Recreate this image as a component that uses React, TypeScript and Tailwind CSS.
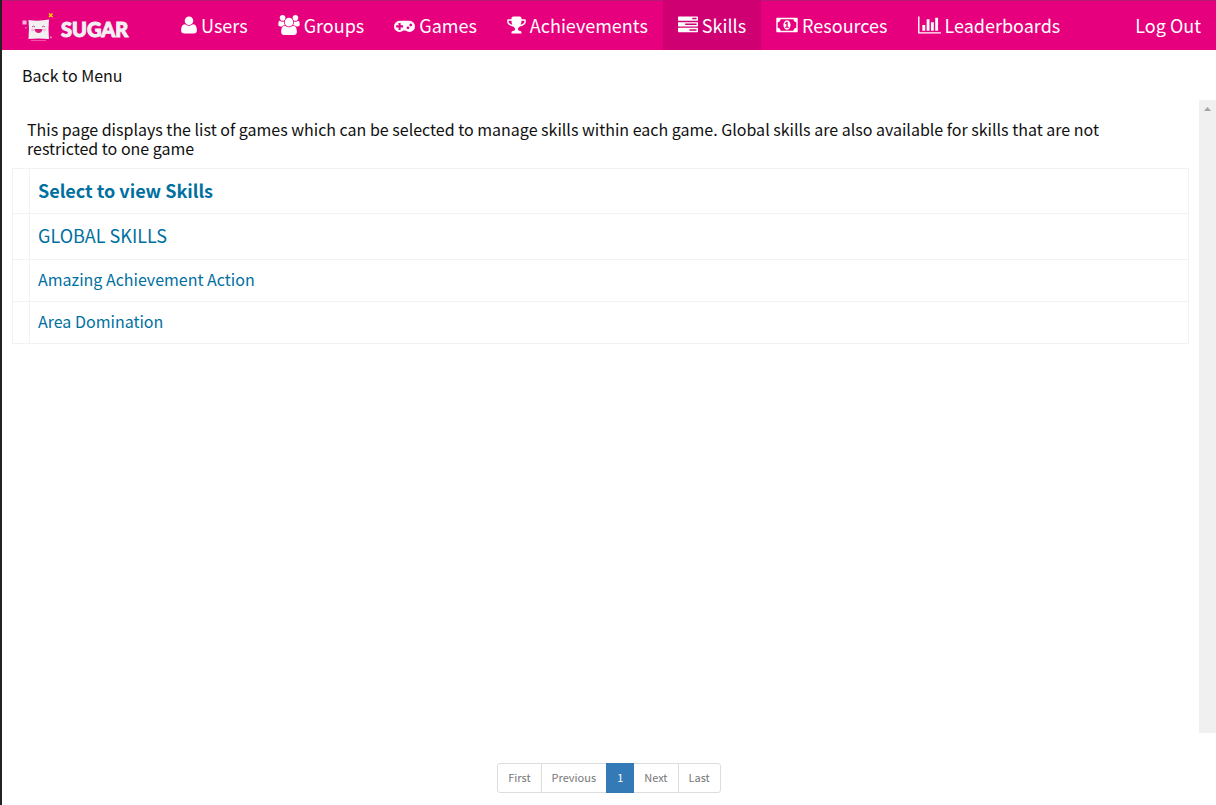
import type { ReactNode } from "react";

type IconShape = { viewBox: string; size: string; path: string };

const icons: Record<string, IconShape> = {
  user: {
    viewBox: "192 0 1408 1792",
    size: "w-4 h-5",
    path: "M1600 1405q0 120-73 189.5t-194 69.5h-874q-121 0-194-69.5t-73-189.5q0-53 3.5-103.5t14-109 26.5-108.5 43-97.5 62-81 85.5-53.5 111.5-20q9 0 42 21.5t74.5 48 108 48 133.5 21.5 133.5-21.5 108-48 74.5-48 42-21.5q61 0 111.5 20t85.5 53.5 62 81 43 97.5 26.5 108.5 14 109 3.5 103.5zm-320-893q0 159-112.5 271.5t-271.5 112.5-271.5-112.5-112.5-271.5 112.5-271.5 271.5-112.5 271.5 112.5 112.5 271.5z",
  },
  users: {
    viewBox: "64 0 1920 1792",
    size: "w-[22px] h-5",
    path: "M657 896q-162 5-265 128h-134q-82 0-138-40.5t-56-118.5q0-353 124-353 6 0 43.5 21t97.5 42.5 119 21.5q67 0 133-23-5 37-5 66 0 159 81 256zm1071 637q0 120-73 189.5t-194 69.5h-874q-121 0-194-69.5t-73-189.5q0-53 3.5-103.5t14-109 26.5-108.5 43-97.5 62-81 85.5-53.5 111.5-20q10 0 43 21.5t73 48 107 48 135 21.5 135-21.5 107-48 73-48 43-21.5q61 0 111.5 20t85.5 53.5 62 81 43 97.5 26.5 108.5 14 109 3.5 103.5zm-1024-1277q0 106-75 181t-181 75-181-75-75-181 75-181 181-75 181 75 75 181zm704 384q0 159-112.5 271.5t-271.5 112.5-271.5-112.5-112.5-271.5 112.5-271.5 271.5-112.5 271.5 112.5 112.5 271.5zm576 225q0 78-56 118.5t-138 40.5h-134q-103-123-265-128 81-97 81-256 0-29-5-66 66 23 133 23 59 0 119-21.5t97.5-42.5 43.5-21q124 0 124 353zm-128-609q0 106-75 181t-181 75-181-75-75-181 75-181 181-75 181 75 75 181z",
  },
  gamepad: {
    viewBox: "0 0 1920 1792",
    size: "w-[21px] h-5",
    path: "M832 1088v-128q0-14-9-23t-23-9h-192v-192q0-14-9-23t-23-9h-128q-14 0-23 9t-9 23v192h-192q-14 0-23 9t-9 23v128q0 14 9 23t23 9h192v192q0 14 9 23t23 9h128q14 0 23-9t9-23v-192h192q14 0 23-9t9-23zm576 64q0-53-37.5-90.5t-90.5-37.5-90.5 37.5-37.5 90.5 37.5 90.5 90.5 37.5 90.5-37.5 37.5-90.5zm256-256q0-53-37.5-90.5t-90.5-37.5-90.5 37.5-37.5 90.5 37.5 90.5 90.5 37.5 90.5-37.5 37.5-90.5zm256 128q0 212-150 362t-362 150q-192 0-338-128h-220q-146 128-338 128-212 0-362-150t-150-362 150-362 362-150h896q212 0 362 150t150 362z",
  },
  trophy: {
    viewBox: "64 0 1664 1792",
    size: "w-[19px] h-5",
    path: "M522 883q-74-162-74-371h-256v96q0 78 94.5 162t235.5 113zm1078-275v-96h-256q0 209-74 371 141-29 235.5-113t94.5-162zm128-128v128q0 71-41.5 143t-112 130-173 97.5-215.5 44.5q-42 54-95 95-38 34-52.5 72.5t-14.5 89.5q0 54 30.5 91t97.5 37q75 0 133.5 45.5t58.5 114.5v64q0 14-9 23t-23 9h-832q-14 0-23-9t-9-23v-64q0-69 58.5-114.5t133.5-45.5q67 0 97.5-37t30.5-91q0-51-14.5-89.5t-52.5-72.5q-53-41-95-95-113-5-215.5-44.5t-173-97.5-112-130-41.5-143v-128q0-40 28-68t68-28h288v-96q0-66 47-113t113-47h576q66 0 113 47t47 113v96h288q40 0 68 28t28 68z",
  },
  tasks: {
    viewBox: "0 0 1792 1792",
    size: "w-5 h-5",
    path: "M1024 1408h640v-128h-640v128zm-384-512h1024v-128h-1024v128zm640-512h384v-128h-384v128zm512 832v256q0 26-19 45t-45 19h-1664q-26 0-45-19t-19-45v-256q0-26 19-45t45-19h1664q26 0 45 19t19 45zm0-512v256q0 26-19 45t-45 19h-1664q-26 0-45-19t-19-45v-256q0-26 19-45t45-19h1664q26 0 45 19t19 45zm0-512v256q0 26-19 45t-45 19h-1664q-26 0-45-19t-19-45v-256q0-26 19-45t45-19h1664q26 0 45 19t19 45z",
  },
  money: {
    viewBox: "0 0 1920 1792",
    size: "w-[22px] h-5",
    path: "M768 1152h384v-96h-128v-448h-114l-148 137 77 80q42-37 55-57h2v288h-128v96zm512-256q0 70-21 142t-59.5 134-101.5 101-138 39-138-39-101.5-101-59.5-134-21-142 21-142 59.5-134 101.5-101 138-39 138 39 101.5 101 59.5 134 21 142zm512 256v-512q-106 0-181-75t-75-181h-1152q0 106-75 181t-181 75v512q106 0 181 75t75 181h1152q0-106 75-181t181-75zm128-832v1152q0 26-19 45t-45 19h-1792q-26 0-45-19t-19-45v-1152q0-26 19-45t45-19h1792q26 0 45 19t19 45z",
  },
  chart: {
    viewBox: "0 0 2048 1792",
    size: "w-[23px] h-5",
    path: "M640 896v512h-256v-512h256zm384-512v1024h-256v-1024h256zm1024 1152v128h-2048v-1536h128v1408h1920zm-640-896v768h-256v-768h256zm384-384v1152h-256v-1152h256z",
  },
};

const navItems = [
  { label: "Users", icon: "user" },
  { label: "Groups", icon: "users" },
  { label: "Games", icon: "gamepad" },
  { label: "Achievements", icon: "trophy" },
  { label: "Skills", icon: "tasks", active: true },
  { label: "Resources", icon: "money" },
  { label: "Leaderboards", icon: "chart" },
];

function NavIcon({ name }: { name: string }) {
  const icon = icons[name];
  return (
    <svg viewBox={icon.viewBox} className={`${icon.size} shrink-0`} fill="currentColor" overflow="visible" aria-hidden="true">
      <path d={icon.path} />
    </svg>
  );
}

function Logo() {
  return (
    <a href="#home" className="flex h-[50px] w-[146px] items-center gap-2 pl-5 text-[#f3f0f2]">
      <svg viewBox="0 0 31 32" className="h-8 w-[31px] shrink-0" aria-hidden="true">
        <path d="M0.5 11.5h4v4h-4z" fill="#f3b9dc" />
        <path d="M3 18h1.5v1.5H3z" fill="#f06ab4" />
        <path d="M6.500 11Q17 12.500 27 10.500q-1 9.500 0 19.500Q16 29 6.500 30Q7.500 20 6.500 11z" fill="#f3f0f2" />
        <path d="M10 18q1.500-1.800 3 0M20 18q1.500-1.800 3 0" fill="none" stroke="#a5407d" strokeWidth="0.9" />
        <circle cx="10.500" cy="21" r="1.500" fill="#f8bcdc" />
        <circle cx="22.500" cy="21" r="1.500" fill="#f8bcdc" />
        <path d="M12.500 20h8q-0.500 4-4 4t-4-4z" fill="#d31c7d" />
        <path d="M28 27.500h1.700v1.700H28z" fill="#f39ccc" />
        <path d="M9 31.500h15" stroke="#f468b2" strokeWidth="0.8" />
        <path d="M27 4.500l3.500 3.500M30.500 4.500L27 8" stroke="#ffd400" strokeWidth="1.500" />
      </svg>
      <span className="pt-[7px] font-['Lato'] text-[20px] leading-6 font-black [-webkit-text-stroke:1px_#f3f0f2] [stroke-linejoin:round]">
        SUGAR
      </span>
    </a>
  );
}

function Row({ children, className }: { children: ReactNode; className: string }) {
  return (
    <tr className={className}>
      <td className="border border-[#f2f2f2]" />
      <td className="border border-[#f2f2f2] px-2 pb-[3px]">
        <a href="#game">{children}</a>
      </td>
    </tr>
  );
}

const pageItem = "flex h-[30px] items-center border-l border-[#dddddd] px-[10px] pb-[2px] first:border-l-0";

export default function App() {
  return (
    <div className="flex min-h-screen flex-col border-l-2 border-[#222222] bg-white font-['Noto_Sans_CJK_SC',sans-serif] text-[16px] text-[#111111]">
      <header className="flex h-[50px] items-stretch bg-[#e6007e] text-[18px] text-white shadow-[inset_0_1px_0_#b01a70]">
        <Logo />
        <nav className="ml-[18px] flex">
          {navItems.map((item) => (
            <a
              key={item.label}
              href={`#${item.label.toLowerCase()}`}
              className={`flex items-center gap-1 px-[15px] ${item.active ? "bg-[#cf0071]" : ""}`}
            >
              <NavIcon name={item.icon} />
              <span className="pb-px leading-6">{item.label}</span>
            </a>
          ))}
        </nav>
        <a href="#logout" className="ml-auto flex items-center px-[15px] pb-px leading-6">
          Log Out
        </a>
      </header>

      <div className="flex h-[50px] items-center px-5 pb-px">
        <a href="#menu" className="leading-5">
          Back to Menu
        </a>
      </div>

      <div className="flex flex-1">
        <main className="flex-1 px-[10px] pt-5">
          <p className="pr-[60px] pl-[15px] leading-[19px]">
            This page displays the list of games which can be selected to manage skills within each game. Global skills
            are also available for skills that are not restricted to one game
          </p>
          <table className="mt-[10px] w-full table-fixed border-collapse text-left text-[#00709f]">
            <colgroup>
              <col className="w-[17px]" />
              <col />
            </colgroup>
            <thead>
              <tr className="h-[45px]">
                <td className="border border-[#f2f2f2]" />
                <th className="border border-[#f2f2f2] px-2 pb-px text-[18px] font-bold">Select to view Skills</th>
              </tr>
            </thead>
            <tbody>
              <Row className="h-[46px] text-[18px]">GLOBAL SKILLS</Row>
              <Row className="h-[42px]">Amazing Achievement Action</Row>
              <Row className="h-[42px]">Area Domination</Row>
            </tbody>
          </table>
        </main>
        <div className="flex w-[17px] justify-center bg-[#f0f0f0] pt-[7px]" aria-hidden="true">
          <svg viewBox="0 0 7 4" className="h-1 w-[7px]">
            <path d="M0 4L3.500 0L7 4z" fill="#a3a3a3" />
          </svg>
        </div>
      </div>

      <nav aria-label="Pagination" className="flex justify-center pt-[30px] pb-3 text-[11px] text-[#777777]">
        <div className="flex h-[30px] items-center rounded-[3px] border border-[#dddddd]">
          <a href="#first" className={pageItem}>First</a>
          <a href="#previous" className={pageItem}>Previous</a>
          <a href="#1" aria-current="page" className="flex h-[30px] items-center bg-[#337ab7] px-[11px] pb-[2px] text-white">1</a>
          <a href="#next" className="flex h-[30px] items-center px-[10px] pb-[2px]">Next</a>
          <a href="#last" className={pageItem}>Last</a>
        </div>
      </nav>
    </div>
  );
}
